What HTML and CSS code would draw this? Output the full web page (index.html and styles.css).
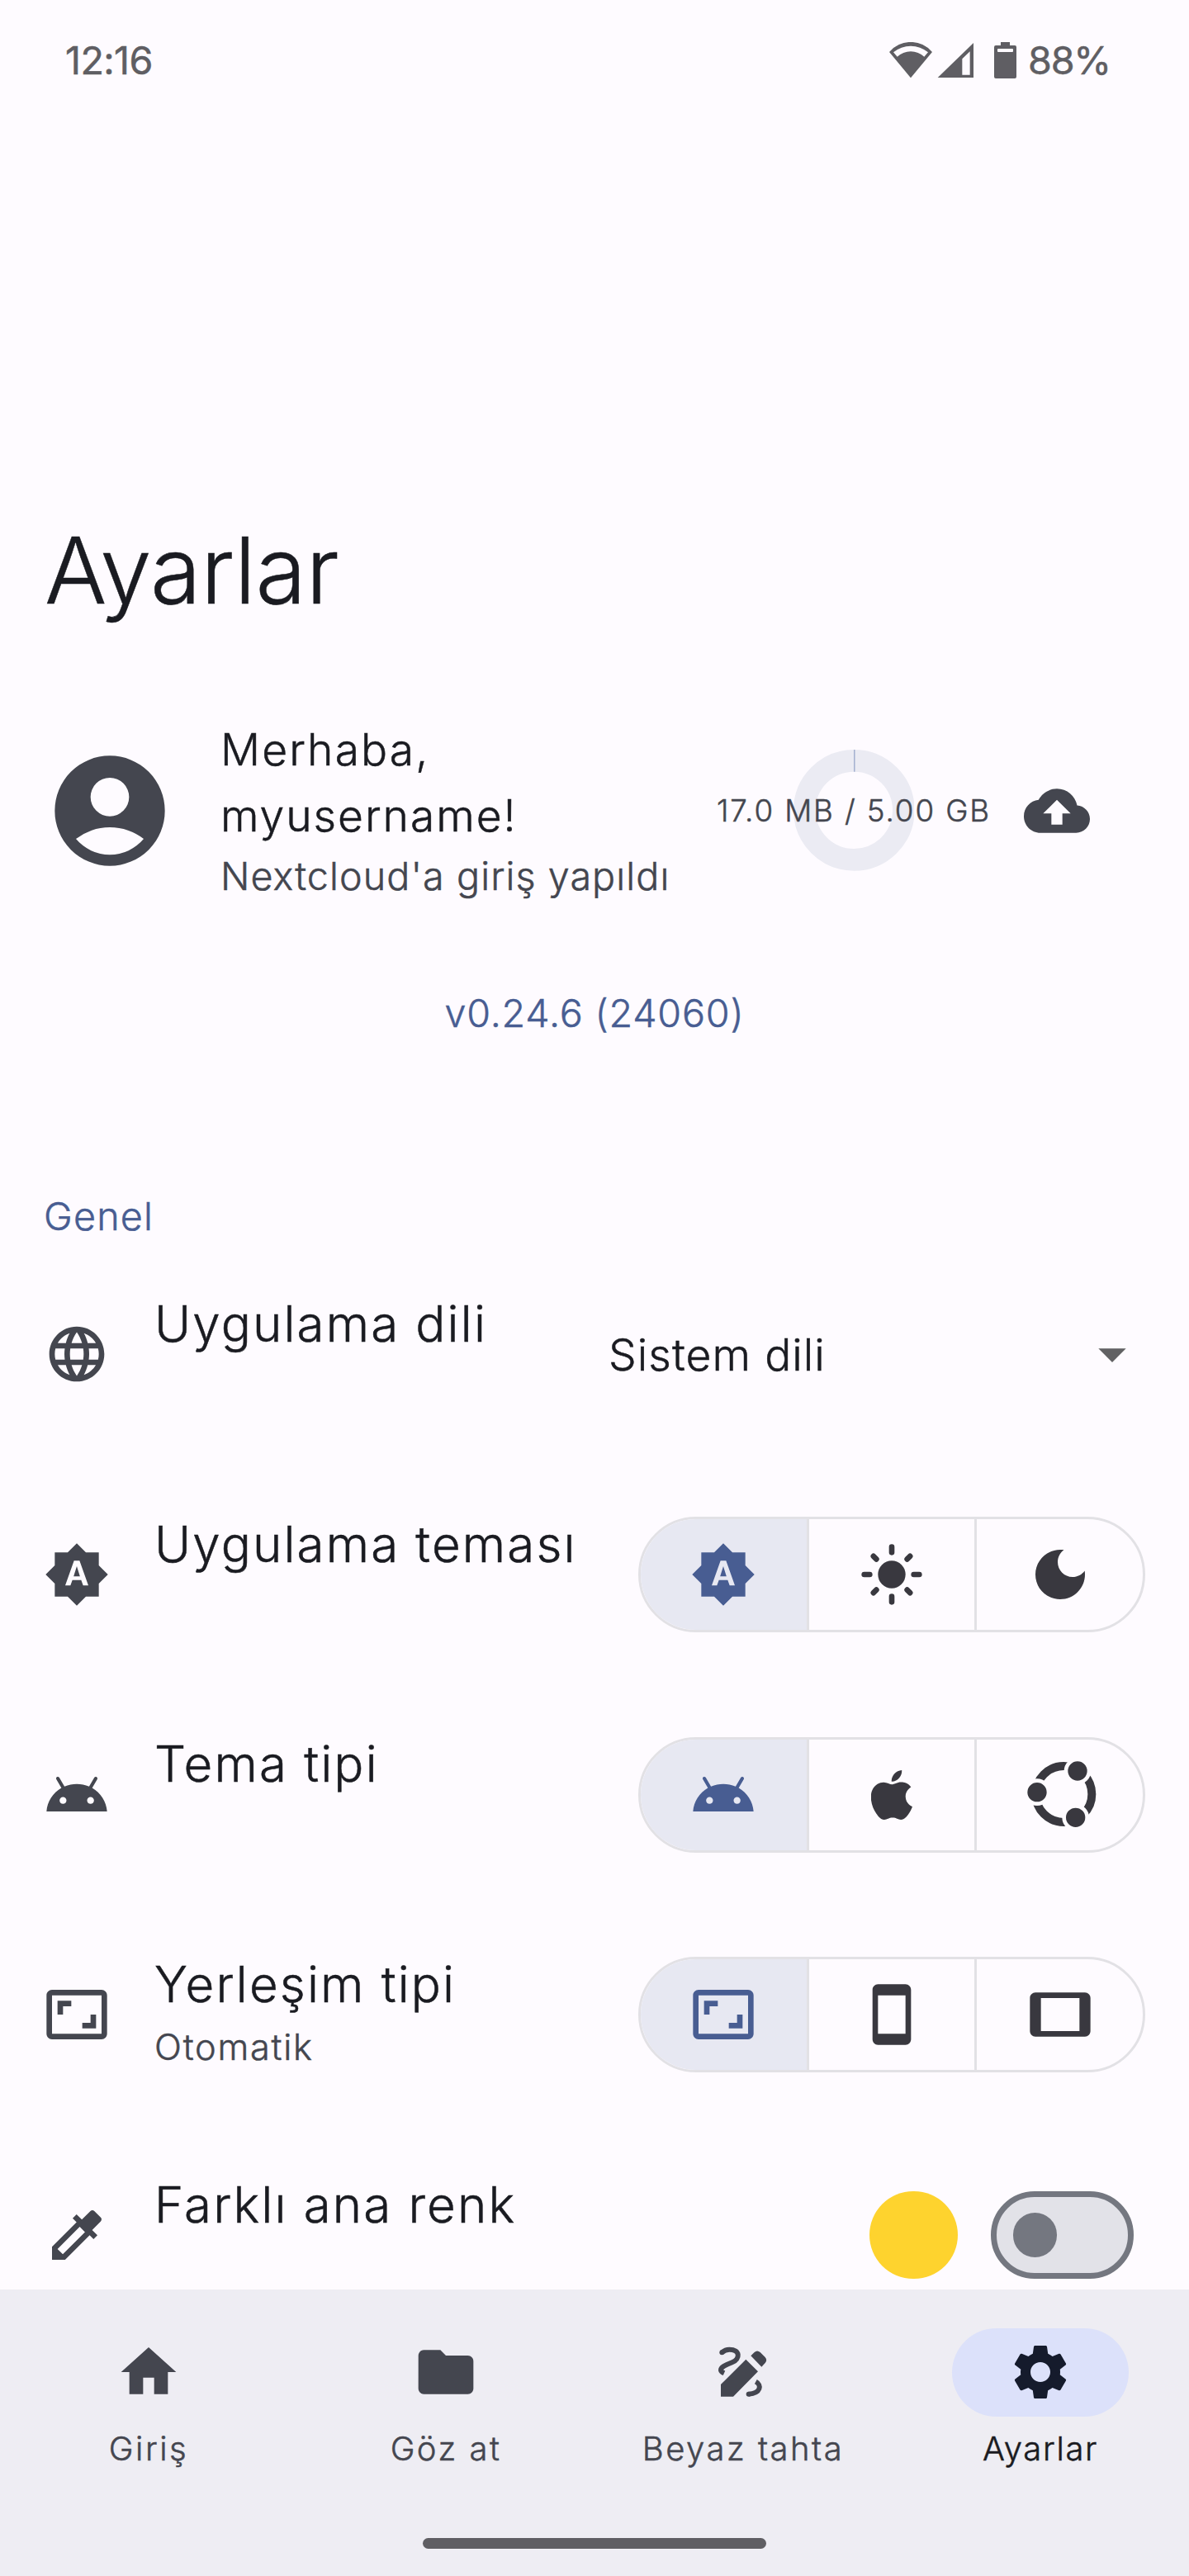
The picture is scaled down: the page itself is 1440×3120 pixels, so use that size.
FILE: index.html
```html
<!DOCTYPE html>
<html lang="tr">
<head>
<meta charset="utf-8">
<title>Ayarlar</title>
<link rel="stylesheet" href="styles.css">
</head>
<body>
<svg class="defs" aria-hidden="true">
  <symbol id="auto" viewBox="0 0 24 24"><path d="M10.85 12.65h2.3L12 9l-1.15 3.65zM20 8.69V4h-4.69L12 .69 8.69 4H4v4.69L.69 12 4 15.31V20h4.69L12 23.31 15.31 20H20v-4.69L23.31 12 20 8.69zM14.3 16l-.7-2h-3.2l-.7 2H7.8L11 7h2l3.2 9h-1.9z"/></symbol>
  <symbol id="android" viewBox="0 0 24 24"><path d="M17.6 9.48l1.84-3.18c.16-.31.04-.69-.26-.85-.29-.15-.65-.06-.83.22l-1.88 3.24c-2.86-1.21-6.08-1.21-8.94 0L5.65 5.67c-.19-.29-.58-.38-.87-.2-.28.18-.37.54-.22.83L6.4 9.48C3.3 11.25 1.28 14.44 1 18h22c-.28-3.56-2.3-6.75-5.4-8.52zM7 15.25c-.69 0-1.25-.56-1.25-1.25s.56-1.25 1.25-1.25 1.25.56 1.25 1.25-.56 1.25-1.25 1.25zm10 0c-.69 0-1.25-.56-1.25-1.25s.56-1.25 1.25-1.25 1.25.56 1.25 1.25-.56 1.25-1.25 1.25z"/></symbol>
  <symbol id="aspect" viewBox="0 0 24 24"><path d="M19 12h-2v3h-3v2h5v-5zM7 9h3V7H5v5h2V9zm14-6H3c-1.1 0-2 .9-2 2v14c0 1.1.9 2 2 2h18c1.1 0 2-.9 2-2V5c0-1.1-.9-2-2-2zm0 16.01H3V4.99h18v14.02z"/></symbol>
</svg>

<div class="screen">
  <main class="content">
    <header class="status">
      <span class="clock">12:16</span>
      <div class="status-icons">
        <svg class="wifi" viewBox="52 32 156 130"><path fill-rule="evenodd" d="M52 68A102 102 0 0 1 208 68L130 162ZM67 69A98 98 0 0 1 193 69L179 85A72 72 0 0 0 81 85Z"/></svg>
        <svg class="signal" viewBox="224 35 132 128"><path fill-rule="evenodd" d="M224 163L356 35V163ZM315 93V151H343V66Z"/></svg>
        <svg class="battery" viewBox="432 30 81 132"><path fill-rule="evenodd" d="M456 30H489V42H507Q513 42 513 48V156Q513 162 507 162H438Q432 162 432 156V48Q432 42 438 42H456ZM447 54Q444 54 444 57V63Q444 66 447 66H498Q501 66 501 63V57Q501 54 498 54Z"/></svg>
        <span class="percent">88%</span>
      </div>
    </header>

    <h1 class="title">Ayarlar</h1>

    <section class="profile">
      <svg class="avatar" viewBox="0 0 24 24"><path fill-rule="evenodd" d="M12 2A10 10 0 1 0 12 22A10 10 0 1 0 12 2ZM12 6A3.5 3.5 0 1 1 12 13A3.5 3.5 0 1 1 12 6ZM5.85 17.1Q7.125 16.125 8.7 15.56T12 15T15.3 15.56T18.15 17.1A8 8 0 0 1 5.85 17.1Z"/></svg>
      <div class="profile-text">
        <p class="greeting">Merhaba,<br><span class="username">myusername!</span></p>
        <p class="login">Nextcloud'a giriş yapıldı</p>
      </div>
      <div class="quota">
        <svg class="ring" viewBox="0 0 44 44"><circle cx="22" cy="22" r="18" fill="none" stroke="#ebebf3" stroke-width="8"/><path d="M22.15 0V8" stroke="#8f9fc6" stroke-width=".35"/></svg>
        <span class="quota-text">17.0 MB / 5.00 GB</span>
      </div>
      <svg class="icon" viewBox="0 0 24 24"><path d="M19.35 10.04C18.67 6.59 15.64 4 12 4 9.11 4 6.6 5.64 5.35 8.04 2.34 8.36 0 10.91 0 14c0 3.31 2.69 6 6 6h13c2.76 0 5-2.24 5-5 0-2.64-2.05-4.78-4.65-4.96zM14 13v4h-4v-4H7l5-5 5 5h-3z"/></svg>
    </section>

    <p class="version">v0.24.6 (24060)</p>

    <h2 class="section">Genel</h2>

    <div class="row">
      <svg class="icon" viewBox="0 0 24 24"><path d="M11.99 2C6.47 2 2 6.48 2 12s4.47 10 9.99 10C17.52 22 22 17.52 22 12S17.52 2 11.99 2zm6.93 6h-2.95c-.32-1.25-.78-2.45-1.38-3.56 1.84.63 3.37 1.91 4.33 3.56zM12 4.04c.83 1.2 1.48 2.53 1.91 3.96h-3.82c.43-1.43 1.08-2.76 1.91-3.96zM4.26 14C4.1 13.36 4 12.69 4 12s.1-1.36.26-2h3.38c-.08.66-.14 1.32-.14 2s.06 1.34.14 2H4.26zm.82 2h2.95c.32 1.25.78 2.45 1.38 3.56-1.84-.63-3.37-1.9-4.33-3.56zm2.95-8H5.08c.96-1.66 2.49-2.93 4.33-3.56C8.81 5.55 8.35 6.75 8.03 8zM12 19.96c-.83-1.2-1.48-2.53-1.91-3.96h3.82c-.43 1.43-1.08 2.76-1.91 3.96zM14.34 14H9.66c-.09-.66-.16-1.32-.16-2s.07-1.35.16-2h4.68c.09.65.16 1.32.16 2s-.07 1.34-.16 2zm.25 5.56c.6-1.11 1.06-2.31 1.38-3.56h2.95c-.96 1.65-2.49 2.93-4.33 3.56zM16.36 14c.08-.66.14-1.32.14-2s-.06-1.34-.14-2h3.38c.16.64.26 1.31.26 2s-.1 1.36-.26 2h-3.38z"/></svg>
      <div class="label"><span class="name">Uygulama dili</span></div>
      <div class="select"><span>Sistem dili</span><svg class="icon arrow" viewBox="0 0 24 24"><path d="M7 10l5 5 5-5z"/></svg></div>
    </div>

    <div class="row">
      <svg class="icon"><use href="#auto"/></svg>
      <div class="label"><span class="name">Uygulama teması</span></div>
      <div class="segments">
        <span class="seg on"><svg class="icon"><use href="#auto"/></svg></span>
        <span class="seg"><svg class="icon" viewBox="0 0 24 24"><circle cx="12" cy="12" r="5"/><path fill="none" stroke="currentColor" stroke-width="2" stroke-linecap="round" d="M2 12h2M20 12h2M12 2v2M12 20v2M5.35 5.35l1.06 1.06M17.59 17.59l1.06 1.06M18.65 5.35l-1.06 1.06M6.41 17.59l-1.06 1.06"/></svg></span>
        <span class="seg"><svg class="icon" viewBox="0 0 24 24"><path d="M12 3c-4.97 0-9 4.03-9 9s4.03 9 9 9 9-4.03 9-9c0-.46-.04-.92-.1-1.36-.98 1.37-2.58 2.26-4.4 2.26-2.98 0-5.4-2.42-5.4-5.4 0-1.81.89-3.42 2.26-4.4-.44-.06-.9-.1-1.36-.1z"/></svg></span>
      </div>
    </div>

    <div class="row">
      <svg class="icon"><use href="#android"/></svg>
      <div class="label"><span class="name">Tema tipi</span></div>
      <div class="segments">
        <span class="seg on"><svg class="icon"><use href="#android"/></svg></span>
        <span class="seg"><svg class="apple" viewBox="3.94 2 16.15 20" preserveAspectRatio="none"><path d="M18.71 19.5c-.83 1.24-1.71 2.45-3.05 2.47-1.34.03-1.77-.79-3.29-.79-1.53 0-2 .77-3.27.82-1.31.05-2.3-1.32-3.14-2.53C4.25 17 2.94 12.45 4.7 9.39c.87-1.52 2.43-2.48 4.12-2.51 1.28-.02 2.5.87 3.29.87.78 0 2.26-1.07 3.81-.91.65.03 2.47.26 3.64 1.98-.09.06-2.17 1.28-2.15 3.81.03 3.02 2.65 4.03 2.68 4.04-.03.07-.42 1.44-1.38 2.83M13 3.5c.73-.83 1.94-1.46 2.94-1.5.13 1.17-.34 2.35-1.04 3.19-.69.85-1.83 1.51-2.95 1.42-.15-1.15.41-2.35 1.05-3.11z"/></svg></span>
        <span class="seg"><svg class="ubuntu" viewBox="641 44 251 241"><circle cx="774" cy="164" r="102" fill="none" stroke="currentColor" stroke-width="30"/><g stroke="#fefbff" stroke-width="14"><circle cx="677" cy="157" r="42"/><circle cx="824" cy="80" r="42"/><circle cx="817" cy="249" r="42"/></g></svg></span>
      </div>
    </div>

    <div class="row">
      <svg class="icon"><use href="#aspect"/></svg>
      <div class="label"><span class="name">Yerleşim tipi</span><span class="sub">Otomatik</span></div>
      <div class="segments">
        <span class="seg on"><svg class="icon"><use href="#aspect"/></svg></span>
        <span class="seg"><svg class="icon" viewBox="0 0 24 24"><path d="M17 1.01L7 1c-1.1 0-1.99.9-1.99 2v18c0 1.1.89 2 1.99 2h10c1.1 0 2-.9 2-2V3c0-1.1-.9-1.99-2-1.99zM17 19H7V5h10v14z"/></svg></span>
        <span class="seg"><svg class="icon" viewBox="0 0 24 24"><path d="M21 4H3c-1.1 0-2 .9-2 2v12c0 1.1.9 2 2 2h18c1.1 0 1.99-.9 1.99-2L23 6c0-1.1-.9-2-2-2zm-2 14H5V6h14v12z"/></svg></span>
      </div>
    </div>

    <div class="row">
      <svg class="icon" viewBox="0 0 24 24"><path d="M20.71 5.63l-2.34-2.34c-.39-.39-1.02-.39-1.41 0l-3.12 3.12-1.93-1.91-1.41 1.41 1.42 1.42L3 16.25V21h4.75l8.92-8.92 1.42 1.42 1.41-1.41-1.92-1.92 3.12-3.12c.4-.4.4-1.03.01-1.42zM6.92 19L5 17.08l8.06-8.06 1.92 1.92L6.92 19z"/></svg>
      <div class="label"><span class="name">Farklı ana renk</span></div>
      <div class="accent">
        <span class="swatch"></span>
        <span class="switch"><span class="thumb"></span></span>
      </div>
    </div>
  </main>

  <nav class="nav">
    <div class="tabs">
      <div class="tab">
        <span class="pill"><svg class="icon" viewBox="0 0 24 24"><path d="M10 20v-6h4v6h5v-8h3L12 3 2 12h3v8z"/></svg></span>
        <span>Giriş</span>
      </div>
      <div class="tab">
        <span class="pill"><svg class="icon" viewBox="0 0 24 24"><path d="M10 4H4c-1.1 0-1.99.9-1.99 2L2 18c0 1.1.9 2 2 2h16c1.1 0 2-.9 2-2V8c0-1.1-.9-2-2-2h-8l-2-2z"/></svg></span>
        <span>Göz at</span>
      </div>
      <div class="tab">
        <span class="pill"><svg class="icon" viewBox="30 25 240 240"><path d="M160 99L204 143L114 234H69V190ZM178 86L191 73Q201 64 212 73L230 91Q239 101 230 112L217 126Z"/><g fill="none" stroke="currentColor" stroke-width="18"><path d="M73 74Q85 63 100 63C140 63 140 98 110 110C82 121 69 128 69 138Q70 144 81 149"/><path d="M170 225C215 222 218 192 196 180"/></g><circle cx="73" cy="74" r="9"/><circle cx="170" cy="225" r="9"/></svg></span>
        <span>Beyaz tahta</span>
      </div>
      <div class="tab active">
        <span class="pill"><svg class="icon" viewBox="0 0 24 24"><path d="M19.14 12.94c.04-.3.06-.61.06-.94 0-.32-.02-.64-.07-.94l2.03-1.58c.18-.14.23-.41.12-.61l-1.92-3.32c-.12-.22-.37-.29-.59-.22l-2.39.96c-.5-.38-1.03-.7-1.62-.94l-.36-2.54c-.04-.24-.24-.41-.48-.41h-3.84c-.24 0-.43.17-.47.41l-.36 2.54c-.59.24-1.13.57-1.62.94l-2.39-.96c-.22-.08-.47 0-.59.22L2.74 8.87c-.12.21-.08.47.12.61l2.03 1.58c-.05.3-.09.63-.09.94s.02.64.07.94l-2.03 1.58c-.18.14-.23.41-.12.61l1.92 3.32c.12.22.37.29.59.22l2.39-.96c.5.38 1.03.7 1.62.94l.36 2.54c.05.24.24.41.48.41h3.84c.24 0 .44-.17.47-.41l.36-2.54c.59-.24 1.13-.56 1.62-.94l2.39.96c.22.08.47 0 .59-.22l1.92-3.32c.12-.22.07-.47-.12-.61l-2.01-1.58zM12 15.6c-1.98 0-3.6-1.62-3.6-3.6s1.62-3.6 3.6-3.6 3.6 1.62 3.6 3.6-1.62 3.6-3.6 3.6z"/></svg></span>
        <span>Ayarlar</span>
      </div>
    </div>
    <div class="handle"></div>
  </nav>
</div>
</body>
</html>
```
FILE: styles.css
```css
* { box-sizing: border-box; }

body {
  margin: 0;
  background: #fefbff;
  color: #1a1b21;
  font-family: Inter, sans-serif;
  font-weight: 300;
  -webkit-text-stroke: .5px currentColor;
}

p, h1, h2 { margin: 0; font-weight: 300; }

svg { display: block; flex: none; fill: currentColor; }
.defs { display: none; }

.screen {
  display: flex;
  flex-direction: column;
  width: 1440px;
  height: 3120px;
}

.content {
  height: 2773px;
  overflow: hidden;
}

/* Status bar */
.status {
  display: flex;
  justify-content: space-between;
  align-items: center;
  height: 145px;
  padding: 0 97px 0 79px;
  color: #5f5e63;
  font-size: 46.67px;
  font-weight: 400;
  line-height: 60px;
}
.clock { letter-spacing: -.6px; }
.status-icons { display: flex; align-items: center; }
.wifi { width: 52px; height: 43.3px; }
.signal { width: 44px; height: 42.7px; margin: 1px 25.5px 0 5.5px; }
.battery { width: 27px; height: 44px; margin-right: 14px; }
.percent { width: 98px; letter-spacing: -1.2px; }

/* Page title */
.title {
  margin: 475px 0 0 54px;
  font-size: 112px;
  line-height: 140px;
  letter-spacing: -.55px;
}

/* Profile */
.profile {
  display: flex;
  align-items: center;
  height: 227px;
  margin-top: 108px;
  padding: 0 120px 0 53px;
  color: #44464f;
}
.avatar { width: 160px; height: 160px; }
.profile-text { margin: 0 auto 0 54px; }
.greeting {
  color: #1a1b21;
  font-size: 53.33px;
  line-height: 80px;
  letter-spacing: 2.15px;
}
.username { letter-spacing: 1.95px; }
.login {
  font-size: 46.67px;
  line-height: 66.67px;
  letter-spacing: 1.08px;
}
.quota {
  display: grid;
  place-items: center;
  margin-right: 40px;
}
.ring, .quota-text { grid-area: 1 / 1; }
.ring { width: 146.67px; height: 146.67px; }
.quota-text {
  font-size: 36.67px;
  letter-spacing: 1.9px;
}

.icon { width: 80px; height: 80px; }

.version {
  margin-top: 99px;
  color: #485d92;
  font-size: 46.67px;
  line-height: 67px;
  letter-spacing: .8px;
  text-align: center;
}

.section {
  margin: 179px 0 0 53px;
  color: #485d92;
  font-size: 46.67px;
  line-height: 67px;
  letter-spacing: 1.2px;
}

/* Setting rows */
.row {
  display: flex;
  align-items: center;
  height: 266.67px;
  padding: 0 53px;
  color: #44464f;
}
.label {
  display: flex;
  flex-direction: column;
  align-self: stretch;
  margin: 0 auto 0 54px;
  padding-top: 51px;
}
.name {
  color: #1a1b21;
  font-size: 60px;
  line-height: 90px;
  letter-spacing: 2.15px;
}
.sub {
  margin-top: 1px;
  font-size: 43.33px;
  line-height: 60px;
  letter-spacing: 1.75px;
}

.select {
  display: flex;
  align-items: center;
  justify-content: space-between;
  width: 650px;
  color: #1a1b21;
  font-size: 53.33px;
  letter-spacing: 1.08px;
}
.arrow { color: #616163; }

.segments {
  display: flex;
  width: 614px;
  height: 140px;
  border: 3px solid #e2e1e5;
  border-radius: 70px;
  overflow: hidden;
  color: #39383f;
}
.seg {
  display: flex;
  flex: 1;
  align-items: center;
  justify-content: center;
}
.seg + .seg { border-left: 3px solid #e2e1e5; }
.seg.on { background: #e7e8f2; color: #485d92; }
.apple { width: 50px; height: 60px; }
.ubuntu { width: 83.67px; height: 80.33px; margin-left: 4px; }

.accent {
  display: flex;
  gap: 40px;
  margin-right: 13.67px;
}
.swatch {
  width: 106.67px;
  height: 106.67px;
  border-radius: 50%;
  background: #fed32e;
}
.switch {
  display: flex;
  align-items: center;
  width: 173.33px;
  height: 106.67px;
  padding-left: 20px;
  border: 7px solid #747780;
  border-radius: 54px;
  background: #e2e2e8;
}
.thumb {
  width: 53.33px;
  height: 53.33px;
  border-radius: 50%;
  background: #747780;
}

/* Bottom navigation */
.nav {
  display: flex;
  flex-direction: column;
  align-items: center;
  justify-content: space-between;
  height: 347px;
  padding: 47px 0 33px;
  background: #eeedf3;
}
.tabs { display: flex; width: 100%; }
.tab {
  display: flex;
  flex: 1;
  flex-direction: column;
  align-items: center;
  gap: 12px;
  color: #44464f;
  font-size: 40px;
  line-height: 53px;
  letter-spacing: 2.5px;
}
.tab.active { color: #1a1b21; letter-spacing: 1.65px; }
.pill {
  display: flex;
  align-items: center;
  justify-content: center;
  width: 213.33px;
  height: 106.67px;
  border-radius: 54px;
}
.active .pill { background: #dce1fa; color: #151b2c; }
.handle {
  width: 416px;
  height: 13.33px;
  border-radius: 7px;
  background: #5f5e63;
}
```
